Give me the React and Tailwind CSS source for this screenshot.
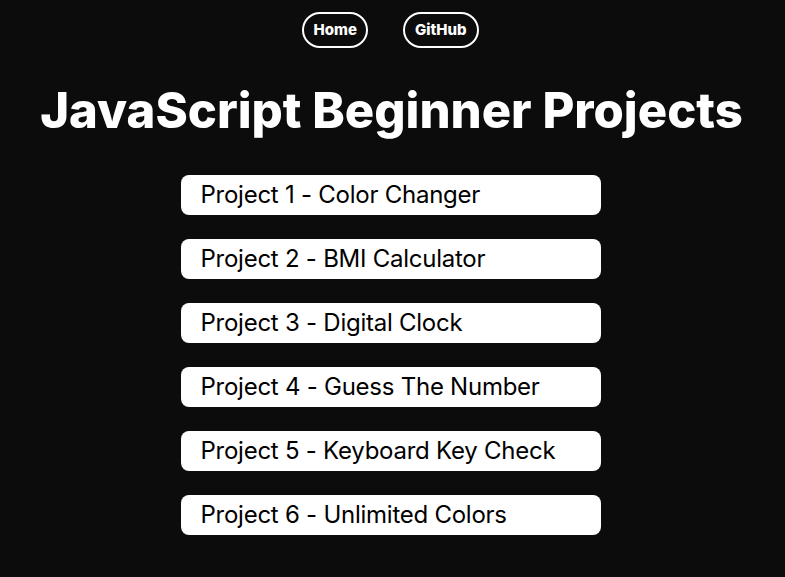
const projects = [
  'Project 1 - Color Changer',
  'Project 2 - BMI Calculator',
  'Project 3 - Digital Clock',
  'Project 4 - Guess The Number',
  'Project 5 - Keyboard Key Check',
  'Project 6 - Unlimited Colors',
];

export default function App() {
  return (
    <div
      className="min-h-screen bg-[#0c0c0c] text-white flex flex-col items-center"
      style={{ fontFamily: 'Inter, "Noto Sans", sans-serif' }}
    >
      <nav className="flex gap-[35px] mt-[12px] mr-[4px]">
        <a href="#" className="h-[36px] px-[9px] flex items-center border-2 border-white rounded-full text-[15px] font-extrabold">
          Home
        </a>
        <a href="#" className="h-[36px] px-[10px] flex items-center border-2 border-white rounded-full text-[15px] font-extrabold">
          GitHub
        </a>
      </nav>
      <h1 className="text-[49px] font-extrabold mt-[31px] leading-[1.3] mr-[2px]">JavaScript Beginner Projects</h1>
      <div className="flex flex-col gap-6 mt-[32px] mr-[4px]">
        {projects.map((p) => (
          <div key={p} className="w-[420px] h-[40px] bg-white text-black rounded-lg pl-5 flex items-center text-[24px] tracking-[-0.25px]">
            {p}
          </div>
        ))}
      </div>
    </div>
  );
}
